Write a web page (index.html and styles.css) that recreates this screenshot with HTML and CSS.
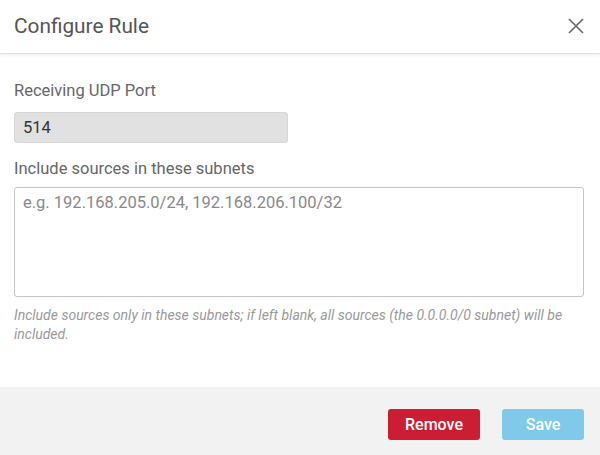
FILE: index.html
```html
<!DOCTYPE html>
<html>
<head>
<meta charset="utf-8">
<title>Configure Rule</title>
<link rel="stylesheet" href="styles.css">
</head>
<body>
<div class="dialog">
  <div class="dlg-head">
    <span class="dlg-title">Configure Rule</span>
    <span class="dlg-close">
      <svg width="16" height="16" viewBox="0 0 16 16"><path d="M1 1L15 15M15 1L1 15" stroke="#666" stroke-width="1.6" fill="none"/></svg>
    </span>
  </div>
  <div class="dlg-body">
    <div class="field-label">Receiving UDP Port</div>
    <div class="port-input">514</div>
    <div class="field-label">Include sources in these subnets</div>
    <div class="subnet-box">e.g. 192.168.205.0/24, 192.168.206.100/32</div>
    <div class="help-text">Include sources only in these subnets; if left blank, all sources (the 0.0.0.0/0 subnet) will be included.</div>
  </div>
  <div class="dlg-foot">
    <button class="btn btn-remove">Remove</button>
    <button class="btn btn-save">Save</button>
  </div>
</div>
</body>
</html>
```

FILE: styles.css
```css
body{margin:0; padding:0; background:#fff; font-family:Roboto, "Liberation Sans", sans-serif;}
.dialog{width:600px; height:455px; display:flex; flex-direction:column;}

/* header */
.dlg-head{height:54px; box-sizing:border-box; display:flex; align-items:center; justify-content:space-between; padding:0 16px 2px 14px; border-bottom:1px solid #e2e2e2; box-shadow:0 1px 3px rgba(0,0,0,0.08);}
.dlg-title{font-size:20.8px; color:#555;}
.dlg-close{width:16px; height:16px; display:flex;}

/* body */
.dlg-body{flex:1; padding:27px 16px 0 14px;}
.field-label{font-size:16.5px; color:#666; line-height:20px;}
.port-input{width:274px; height:31px; box-sizing:border-box; margin:11px 0 16px; background:#e1e1e1; border:1px solid #d6d6d6; border-radius:3px; padding:0 8px; font-size:16.5px; line-height:29px; color:#333;}
.subnet-box{height:110px; box-sizing:border-box; margin-top:8px; border:1px solid #c4c4c4; border-radius:3px; padding:5px 8px; font-size:16.5px; line-height:20px; color:#888;}
.help-text{margin-top:9px; font-size:14px; font-style:italic; color:#999; line-height:19px;}

/* footer */
.dlg-foot{height:68px; background:#f2f2f2; display:flex; justify-content:flex-end; align-items:flex-start; padding:22px 16px 0 0; box-sizing:border-box;}
.btn{height:31px; border:none; border-radius:3px; font-family:Roboto, "Liberation Sans", sans-serif; font-size:16px; font-weight:500; color:#fff; padding:0;}
.btn-remove{width:92px; background:#cb1e35; margin-right:22px;}
.btn-save{width:82px; background:#80c9e9;}
```
